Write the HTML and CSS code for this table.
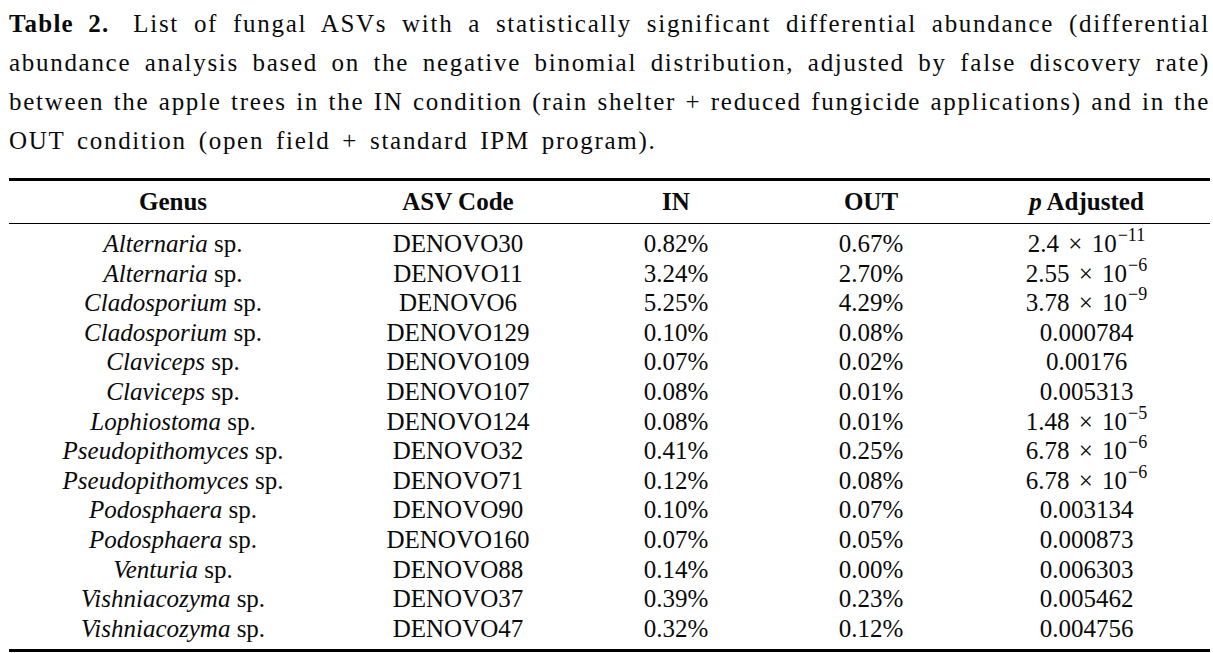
FILE: index.html
```html
<!DOCTYPE html>
<html lang="en">
<head>
<meta charset="utf-8">
<title>Table 2</title>
<link rel="stylesheet" href="styles.css">
</head>
<body>
<div class="page">
  <p class="caption">
    <span class="line"><b class="label">Table 2.</b> List of fungal ASVs with a statistically significant differential abundance (differential</span>
    <span class="line">abundance analysis based on the negative binomial distribution, adjusted by false discovery rate)</span>
    <span class="line">between the apple trees in the IN condition (rain shelter + reduced fungicide applications) and in the</span>
    <span class="line last">OUT condition (open field + standard IPM program).</span>
  </p>
  <table class="data">
    <colgroup>
      <col class="c-genus">
      <col class="c-code">
      <col class="c-in">
      <col class="c-out">
      <col class="c-p">
    </colgroup>
    <thead>
      <tr>
        <th>Genus</th>
        <th>ASV Code</th>
        <th>IN</th>
        <th>OUT</th>
        <th><i class="var">p</i> Adjusted</th>
      </tr>
    </thead>
    <tbody>
      <tr class="first"><td><i>Alternaria</i> sp.</td><td>DENOVO30</td><td>0.82%</td><td>0.67%</td><td>2.4 <span class="op">×</span> 10<sup>−11</sup></td></tr>
      <tr><td><i>Alternaria</i> sp.</td><td>DENOVO11</td><td>3.24%</td><td>2.70%</td><td>2.55 <span class="op">×</span> 10<sup>−6</sup></td></tr>
      <tr><td><i>Cladosporium</i> sp.</td><td>DENOVO6</td><td>5.25%</td><td>4.29%</td><td>3.78 <span class="op">×</span> 10<sup>−9</sup></td></tr>
      <tr><td><i>Cladosporium</i> sp.</td><td>DENOVO129</td><td>0.10%</td><td>0.08%</td><td>0.000784</td></tr>
      <tr><td><i>Claviceps</i> sp.</td><td>DENOVO109</td><td>0.07%</td><td>0.02%</td><td>0.00176</td></tr>
      <tr><td><i>Claviceps</i> sp.</td><td>DENOVO107</td><td>0.08%</td><td>0.01%</td><td>0.005313</td></tr>
      <tr><td><i>Lophiostoma</i> sp.</td><td>DENOVO124</td><td>0.08%</td><td>0.01%</td><td>1.48 <span class="op">×</span> 10<sup>−5</sup></td></tr>
      <tr><td><i>Pseudopithomyces</i> sp.</td><td>DENOVO32</td><td>0.41%</td><td>0.25%</td><td>6.78 <span class="op">×</span> 10<sup>−6</sup></td></tr>
      <tr><td><i>Pseudopithomyces</i> sp.</td><td>DENOVO71</td><td>0.12%</td><td>0.08%</td><td>6.78 <span class="op">×</span> 10<sup>−6</sup></td></tr>
      <tr><td><i>Podosphaera</i> sp.</td><td>DENOVO90</td><td>0.10%</td><td>0.07%</td><td>0.003134</td></tr>
      <tr><td><i>Podosphaera</i> sp.</td><td>DENOVO160</td><td>0.07%</td><td>0.05%</td><td>0.000873</td></tr>
      <tr><td><i>Venturia</i> sp.</td><td>DENOVO88</td><td>0.14%</td><td>0.00%</td><td>0.006303</td></tr>
      <tr><td><i>Vishniacozyma</i> sp.</td><td>DENOVO37</td><td>0.39%</td><td>0.23%</td><td>0.005462</td></tr>
      <tr class="last"><td><i>Vishniacozyma</i> sp.</td><td>DENOVO47</td><td>0.32%</td><td>0.12%</td><td>0.004756</td></tr>
    </tbody>
  </table>
</div>
</body>
</html>
```

FILE: styles.css
```css
html, body {
  margin: 0;
  padding: 0;
  background: #ffffff;
}

body {
  font-family: "Liberation Serif", "Times New Roman", serif;
  font-size: 25px;
  color: #0a0a0a;
}

.page {
  width: 1201px;
  margin: 0 0 0 9px;
  padding-top: 4px;
}

.caption {
  margin: 0;
  line-height: 39px;
  letter-spacing: 1.7px;
  word-spacing: 0;
}

.caption .line {
  display: block;
  text-align: justify;
  text-align-last: justify;
  white-space: nowrap;
}

.caption .line.last {
  text-align-last: left;
  word-spacing: 4px;
}

.caption .label {
  font-weight: bold;
  letter-spacing: 1.2px;
  margin-right: 9px;
}

.data {
  width: 1201px;
  margin-top: 18px;
  border-collapse: collapse;
  table-layout: fixed;
  border-top: 3px solid #000;
  border-bottom: 3px solid #000;
}

.c-genus { width: 328px; }
.c-code { width: 242px; }
.c-in { width: 194px; }
.c-out { width: 196px; }
.c-p { width: 241px; }

.data th,
.data td {
  padding: 0;
  text-align: center;
  white-space: nowrap;
}

.data th {
  font-weight: bold;
  line-height: 30px;
  padding-top: 6px;
  padding-bottom: 6px;
  border-bottom: 1.3px solid #000;
}

.data th .var {
  font-weight: bold;
  font-style: italic;
}

.data td {
  line-height: 29.6px;
  height: 29.6px;
}

.data tr.first td {
  padding-top: 5px;
}

.data tr.last td {
  padding-bottom: 6px;
}

.data td:last-child,
.data th:last-child {
  padding-right: 6px;
}

.data .op {
  margin: 0 3px;
}

.data sup {
  font-size: 18px;
  line-height: 0;
  vertical-align: 11px;
  margin-left: 1px;
}
```
